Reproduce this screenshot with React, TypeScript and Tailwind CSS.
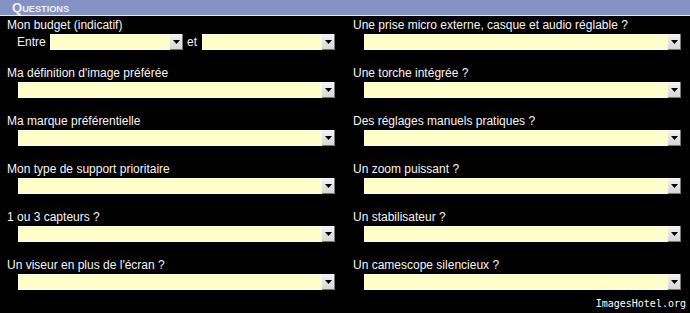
import React from 'react'

const questionsLeft = [
  'Ma définition d\'image préférée',
  'Ma marque préférentielle',
  'Mon type de support prioritaire',
  '1 ou 3 capteurs ?',
  'Un viseur en plus de l\'écran ?',
]

const questionsRight = [
  'Une prise micro externe, casque et audio réglable ?',
  'Une torche intégrée ?',
  'Des réglages manuels pratiques ?',
  'Un zoom puissant ?',
  'Un stabilisateur ?',
  'Un camescope silencieux ?',
]

function FakeSelect({ className = '' }: { className?: string }) {
  return (
    <div className={`flex h-[16px] bg-[#ffffcc] ${className}`}>
      <div className="flex-1" />
      <div className="flex h-[16px] w-[13px] items-center justify-center border-r border-b border-[#7a7a7a] bg-gradient-to-b from-[#f4f4f4] to-[#d6d6d6]">
        <svg width="7" height="4" viewBox="0 0 7 4">
          <polygon points="0,0 7,0 3.5,4" fill="#000" />
        </svg>
      </div>
    </div>
  )
}

function Question({ label }: { label: string }) {
  return (
    <div className="h-[48px] pl-[7px]">
      <div className="h-[16px] leading-[16px]">{label}</div>
      <FakeSelect className="mt-[1px] ml-[11px] w-[317px]" />
    </div>
  )
}

export default function App() {
  return (
    <div
      className="relative h-[313px] w-full overflow-hidden bg-black text-[12px] text-[#f6f6f6]"
      style={{ fontFamily: '"Liberation Sans", Arial, sans-serif' }}
    >
      {/* Header */}
      <div className="h-[15px] bg-[#8391c3] pl-[12px] leading-[15px] font-bold text-[#eef0f8]">
        <span className="text-[13px]">Q</span>
        <span className="text-[9.2px]">UESTIONS</span>
      </div>
      <div className="h-[1px] bg-[#e8ebf5]" />

      {/* Questions */}
      <div className="grid grid-cols-[346px_344px] pt-[1px]">
        <div>
          <div className="h-[48px] pl-[7px]">
            <div className="h-[16px] leading-[16px]">Mon budget (indicatif)</div>
            <div className="mt-[1px] flex items-center">
              <span className="ml-[10px] w-[33px] leading-[16px]">Entre</span>
              <FakeSelect className="w-[133px]" />
              <span className="ml-[4px] w-[15px] leading-[16px]">et</span>
              <FakeSelect className="w-[133px]" />
            </div>
          </div>
          {questionsLeft.map(q => (
            <Question key={q} label={q} />
          ))}
        </div>
        <div>
          {questionsRight.map(q => (
            <Question key={q} label={q} />
          ))}
        </div>
      </div>

      <div
        className="absolute right-[4px] bottom-[3px] text-[10px] leading-[12px] text-white"
        style={{ fontFamily: '"DejaVu Sans Mono", monospace' }}
      >
        ImagesHotel.org
      </div>
    </div>
  )
}
